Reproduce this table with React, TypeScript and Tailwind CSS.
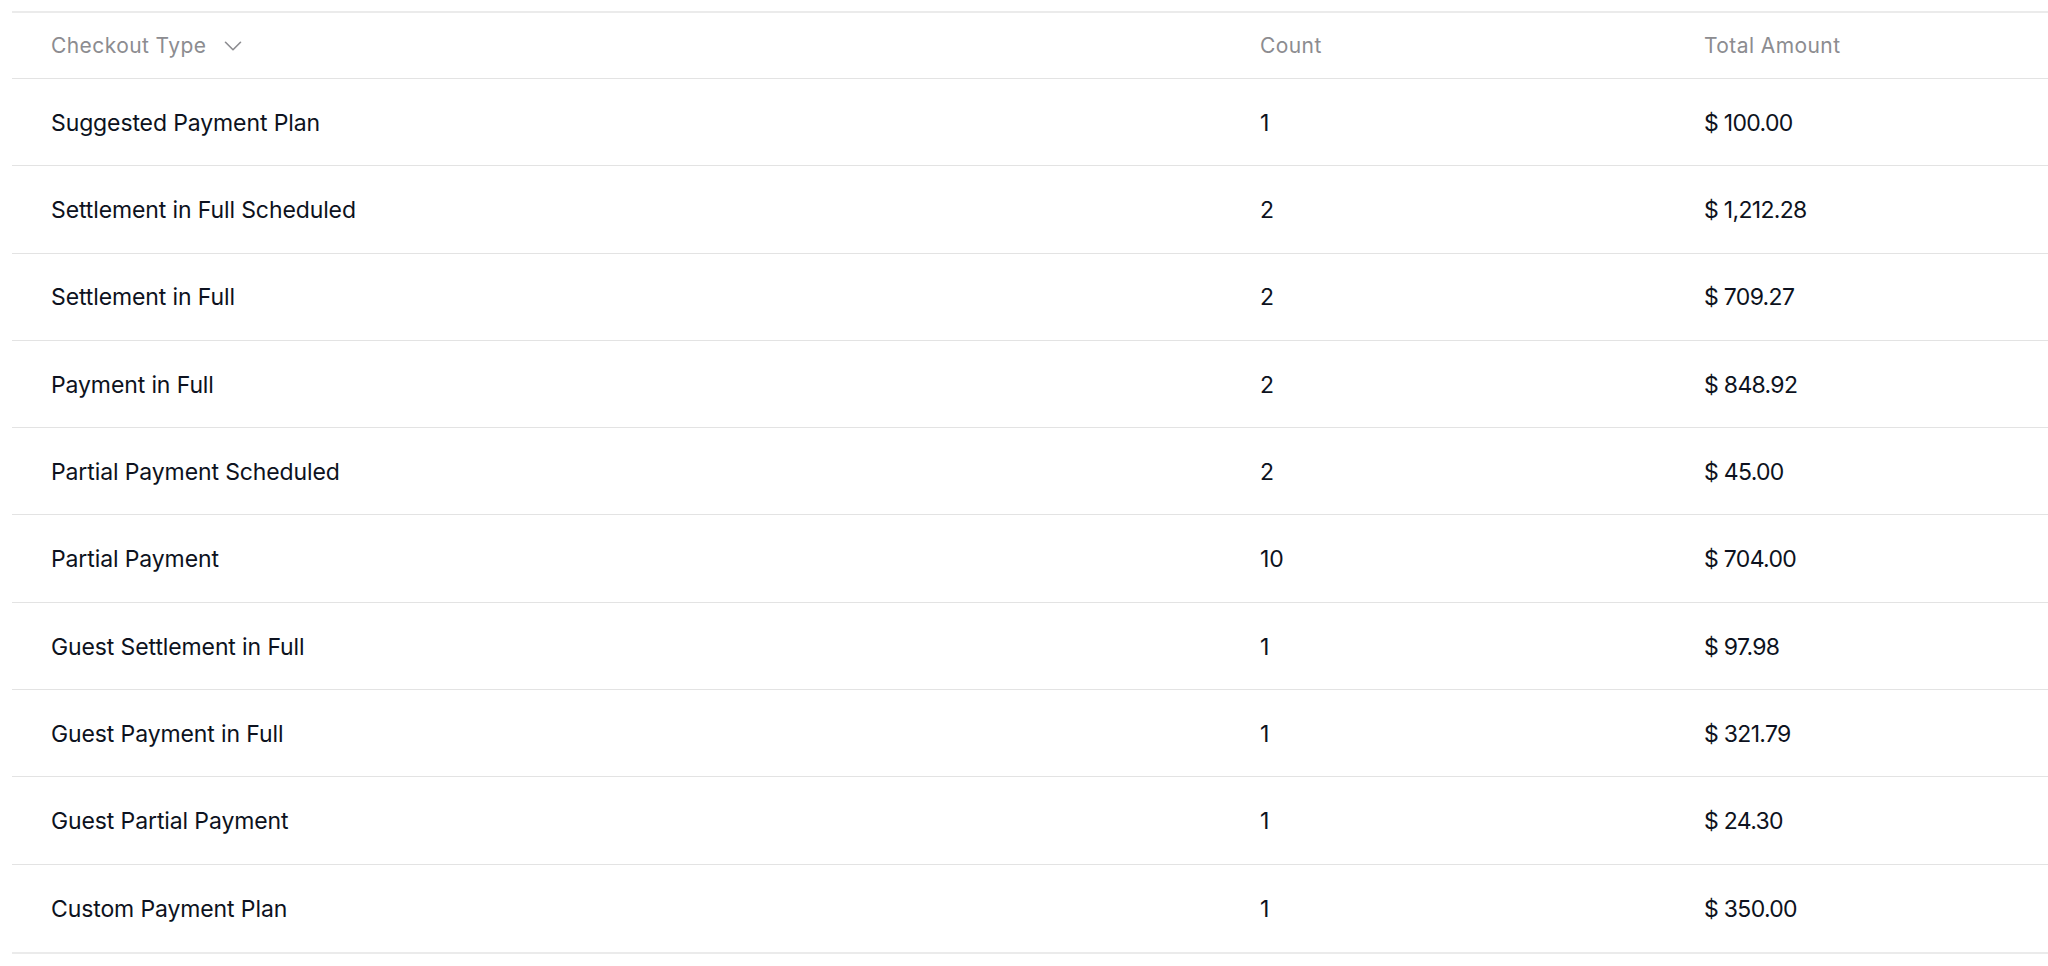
import { ChevronDown } from "lucide-react";

interface CheckoutRow {
  type: string;
  count: number;
  total: string;
}

const rows: CheckoutRow[] = [
  { type: "Suggested Payment Plan", count: 1, total: "$ 100.00" },
  { type: "Settlement in Full Scheduled", count: 2, total: "$ 1,212.28" },
  { type: "Settlement in Full", count: 2, total: "$ 709.27" },
  { type: "Payment in Full", count: 2, total: "$ 848.92" },
  { type: "Partial Payment Scheduled", count: 2, total: "$ 45.00" },
  { type: "Partial Payment", count: 10, total: "$ 704.00" },
  { type: "Guest Settlement in Full", count: 1, total: "$ 97.98" },
  { type: "Guest Payment in Full", count: 1, total: "$ 321.79" },
  { type: "Guest Partial Payment", count: 1, total: "$ 24.30" },
  { type: "Custom Payment Plan", count: 1, total: "$ 350.00" },
];

export default function App() {
  return (
    <div className="min-h-screen bg-white pt-[11px] pl-[12px] font-['Inter',sans-serif]">
      <div className="border-t-2 border-b-2 border-[#ebebeb]">
        <div className="grid h-[66px] grid-cols-[1209px_444px_1fr] items-center border-b border-[#e3e3e3] text-[21px] tracking-[0.02em] text-[#8c8c90]">
          <div className="flex items-center gap-[12px] pl-[39px]">
            <span>Checkout Type</span>
            <ChevronDown className="h-[30px] w-[30px] text-[#8c8c90]" strokeWidth={1.3} />
          </div>
          <div className="pl-[39px]">Count</div>
          <div className="pl-[39px]">Total Amount</div>
        </div>

        {rows.map((row, i) => (
          <div
            key={row.type}
            className={`grid h-[87.3px] grid-cols-[1209px_444px_1fr] items-center pt-[2px] text-[23px] tracking-[-0.005em] text-[#0d1220] ${
              i < rows.length - 1 ? "border-b border-[#e3e3e3]" : ""
            }`}
          >
            <div className="pl-[39px]">{row.type}</div>
            <div className="pl-[39px]">{row.count}</div>
            <div className="pl-[39px] tracking-[-0.03em]">{row.total}</div>
          </div>
        ))}
      </div>
    </div>
  );
}
